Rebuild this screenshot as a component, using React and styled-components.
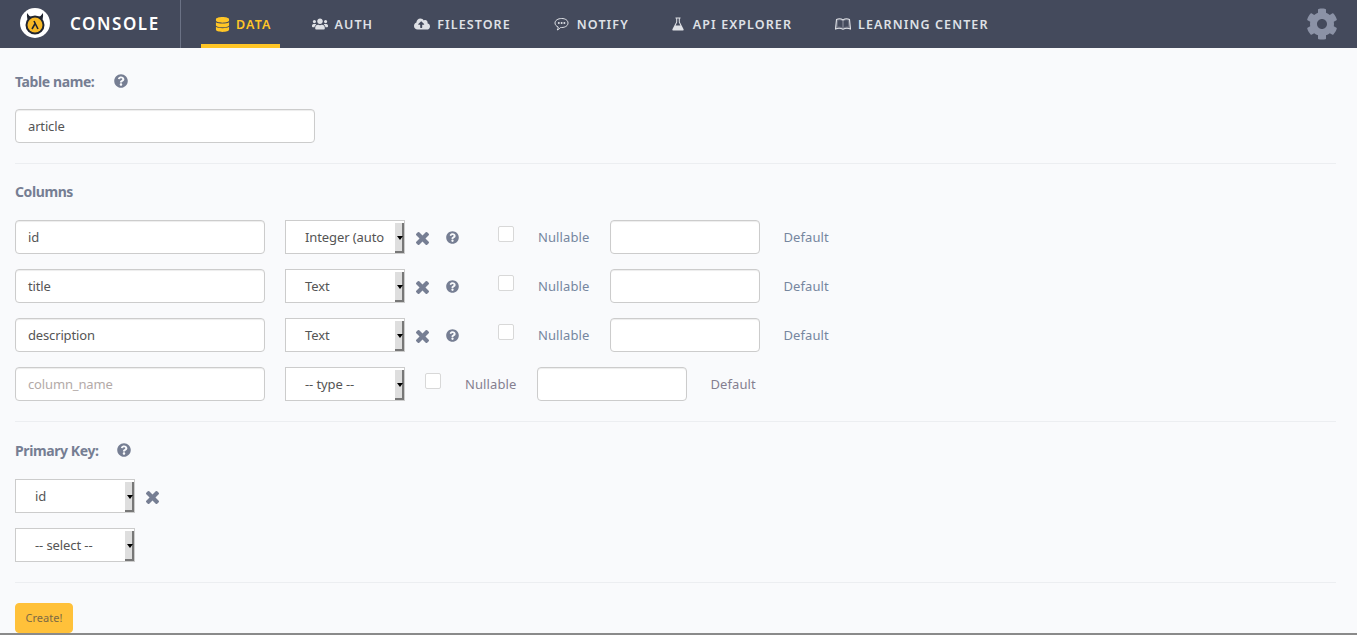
import React from 'react'
import styled, { createGlobalStyle } from 'styled-components'
import { FaDatabase, FaUsers, FaCloudUploadAlt, FaCog, FaQuestionCircle } from 'react-icons/fa'

const GlobalStyle = createGlobalStyle`
  html, body {
    margin: 0;
    padding: 0;
    height: 100%;
    background: #f9fafc;
    font-family: "Noto Sans", "Open Sans", sans-serif;
    font-size: 14px;
    color: #555;
    overflow: hidden;
  }
  * {
    box-sizing: border-box;
  }
`

const Page = styled.div`
  height: 635px;
  display: flex;
  flex-direction: column;
  border-bottom: 2px solid #8a8a8a;
  overflow: hidden;
`

const NavBar = styled.nav`
  height: 48px;
  flex: none;
  display: flex;
  align-items: stretch;
  background: #444a5c;
`

const Brand = styled.div`
  width: 181px;
  flex: none;
  display: flex;
  align-items: center;
  padding: 0 0 2px 19px;
  border-right: 1px solid #6b7285;
`

const BrandName = styled.span`
  margin-left: 19px;
  color: #fff;
  font-size: 17px;
  font-weight: 600;
  letter-spacing: 1.55px;
`

const Tabs = styled.div`
  display: flex;
  gap: 19px;
  margin-left: 20px;
`

const Tab = styled.div`
  display: flex;
  align-items: center;
  padding: 4px 9px 0 ${(p) => p.$lead}px;
  height: 48px;
  font-size: 12.5px;
  font-weight: 600;
  letter-spacing: 1.1px;
  white-space: nowrap;
  color: ${(p) => (p.$active ? '#ffc627' : '#dfe1e6')};
  border-bottom: 4px solid ${(p) => (p.$active ? '#ffc627' : 'transparent')};
`

const TabIcon = styled.span`
  width: ${(p) => p.$slot}px;
  flex: none;
  display: flex;
  align-items: center;
  font-size: ${(p) => p.$size || 14}px;
`

const SettingsIcon = styled.div`
  margin-left: auto;
  width: 70px;
  display: flex;
  align-items: center;
  justify-content: center;
  color: #8b92a6;
  font-size: 32px;
`

const Content = styled.main`
  flex: 1;
  padding: 0 21px 0 15px;
`

const Section = styled.section`
  border-bottom: ${(p) => (p.$last ? 'none' : '1px solid #eceef1')};
  padding-top: ${(p) => p.$top}px;
  padding-bottom: 20px;
`

const Heading = styled.div`
  display: flex;
  align-items: center;
  height: 26px;
  margin-bottom: ${(p) => p.$below || 15}px;
  font-size: 14px;
  font-weight: 700;
  letter-spacing: -0.4px;
  color: #767e93;
`

const HelpIcon = styled(FaQuestionCircle)`
  color: #767e93;
  font-size: ${(p) => p.$size || 13}px;
  margin-left: ${(p) => p.$gap || 0}px;
  flex: none;
`

const TextInput = styled.div`
  width: ${(p) => p.$width}px;
  height: 34px;
  flex: none;
  display: flex;
  align-items: center;
  padding: 0 12px;
  background: #fff;
  border: 1px solid #ccc;
  border-radius: 4px;
  box-shadow: inset 0 1px 1px rgba(0, 0, 0, 0.075);
  font-size: 13px;
  letter-spacing: -0.15px;
  color: ${(p) => (p.$placeholder ? '#b3aaa8' : '#555')};
`

const SelectBox = styled.div`
  position: relative;
  width: 120px;
  height: 34px;
  flex: none;
  padding: 0 21px 0 19px;
  background: #fff;
  border: 1px solid #ccc;
  font-size: 13px;
  line-height: 32px;
  letter-spacing: -0.1px;
  color: #555;
  white-space: nowrap;
  overflow: hidden;
`

const SelectButton = styled.span`
  position: absolute;
  top: 2px;
  right: 0;
  bottom: 0;
  width: 9px;
  background: #dedede;
  border-right: 2px solid #777;
  border-bottom: 2px solid #777;
  &::after {
    content: '';
    position: absolute;
    top: 13px;
    left: 2px;
    border-left: 3px solid transparent;
    border-right: 3px solid transparent;
    border-top: 4px solid #000;
  }
`

const RemoveSvg = styled.svg`
  width: 13px;
  height: 13px;
  margin: 2px 0 0 11px;
  flex: none;
  fill: #767e93;
`

const ColumnList = styled.div`
  display: flex;
  flex-direction: column;
  gap: 15px;
`

const ColumnRow = styled.div`
  display: flex;
  align-items: center;
`

const TypeCell = styled.div`
  margin-left: 20px;
  width: ${(p) => (p.$wide ? 193 : 120)}px;
  display: flex;
  align-items: center;
  flex: none;
`

const Check = styled.span`
  width: 16px;
  height: 16px;
  flex: none;
  margin: -6px 0 0 20px;
  background: #fff;
  border: 1px solid #d8d8d8;
  border-radius: 2px;
`

const Hint = styled.span`
  font-size: 13px;
  letter-spacing: 0.1px;
  flex: none;
  color: ${(p) => (p.$muted ? '#857f90' : '#76869f')};
  margin: ${(p) => p.$margin};
`

const KeyList = styled.div`
  display: flex;
  flex-direction: column;
  gap: 15px;
`

const KeyRow = styled.div`
  display: flex;
  align-items: center;
`

const CreateButton = styled.button`
  display: block;
  width: 58px;
  height: 30px;
  padding: 0 0 2px;
  border: 1px solid #ffc13a;
  border-radius: 4px;
  background: #ffc13a;
  color: #7d6a45;
  font-family: inherit;
  font-size: 11px;
`

const Logo = () => (
  <svg width="32" height="32" viewBox="0 0 32 32">
    <circle cx="16" cy="16" r="15" fill="#fff" />
    <path d="M8 6 Q7.5 12 10 15 L13 10 Q10 9.5 8 6 Z M24 6 Q24.5 12 22 15 L19 10 Q22 9.5 24 6 Z" fill="#20242f" />
    <circle cx="16" cy="18" r="9.5" fill="#20242f" />
    <circle cx="16" cy="18" r="7.5" fill="#f7b824" />
    <path d="M13 22 L16.2 16.5 L15 14 M16.2 16.5 L19 22" stroke="#20242f" strokeWidth="1.6" fill="none" />
  </svg>
)

const CommentIcon = () => (
  <svg width="15" height="15" viewBox="0 0 15 15">
    <path d="M7.7 1.5 C11.4 1.5 14 3.4 14 6 C14 8.6 11.4 10.5 7.7 10.5 L6.6 10.5 C5.6 11.5 4.8 12.4 3.2 13 C3.9 12 4.2 11 4.2 10 C2.2 9.2 1 7.7 1 6 C1 3.4 3.9 1.5 7.7 1.5 Z" fill="none" stroke="currentColor" strokeWidth="1" />
    <circle cx="4.8" cy="6" r="1" fill="currentColor" />
    <circle cx="7.6" cy="6" r="1" fill="currentColor" />
    <circle cx="10.4" cy="6" r="1" fill="currentColor" />
  </svg>
)

const FlaskIcon = () => (
  <svg width="12" height="14" viewBox="0 0 12 14">
    <path d="M3.5 0.5 H8.5 V1.5 H7.8 V5 L11.6 12.2 Q12 13.5 10.8 13.5 H1.2 Q0 13.5 0.4 12.2 L4.2 5 V1.5 H3.5 Z M5.2 1.5 V5.3 L3.6 8.5 H8.4 L6.8 5.3 V1.5 Z" fill="currentColor" fillRule="evenodd" />
  </svg>
)

const BookIcon = () => (
  <svg width="16" height="14" viewBox="0 0 16 14">
    <path d="M1.5 2.5 C3.5 1.6 6 1.6 8 3 C10 1.6 12.5 1.6 14.5 2.5 L15.5 12 C13 11 10.5 11 8 12.2 C5.5 11 3 11 0.5 12 Z" fill="currentColor" fillOpacity="0.25" stroke="currentColor" strokeWidth="1.1" />
    <path d="M3.2 3.6 C4.8 3.1 6 3.4 7 4.3 V10 C5.5 9.4 4.2 9.3 2.7 9.6 Z M12.8 3.6 C11.2 3.1 10 3.4 9 4.3 V10 C10.5 9.4 11.8 9.3 13.3 9.6 Z" fill="#444a5c" />
  </svg>
)

const RemoveIcon = () => (
  <RemoveSvg viewBox="110 366 1188 1188">
    <path d="M1298 1322q0 40-28 68l-136 136q-28 28-68 28t-68-28l-294-294-294 294q-28 28-68 28t-68-28l-136-136q-28-28-28-68t28-68l294-294-294-294q-28-28-28-68t28-68l136-136q28-28 68-28t68 28l294 294 294-294q28-28 68-28t68 28l136 136q28 28 28 68t-28 68l-294 294 294 294q28 28 28 68z" />
  </RemoveSvg>
)

const tabs = [
  { label: 'DATA', icon: <FaDatabase />, lead: 14, slot: 21, size: 15, active: true },
  { label: 'AUTH', icon: <FaUsers />, lead: 13, slot: 22, size: 16 },
  { label: 'FILESTORE', icon: <FaCloudUploadAlt />, lead: 13, slot: 23, size: 16 },
  { label: 'NOTIFY', icon: <CommentIcon />, lead: 15, slot: 23 },
  { label: 'API EXPLORER', icon: <FlaskIcon />, lead: 15, slot: 21 },
  { label: 'LEARNING CENTER', icon: <BookIcon />, lead: 15, slot: 23 },
]

const columns = [
  { name: 'id', type: 'Integer (auto' },
  { name: 'title', type: 'Text' },
  { name: 'description', type: 'Text' },
]

const Select = ({ children }) => (
  <SelectBox>
    {children}
    <SelectButton />
  </SelectBox>
)

export default function App() {
  return (
    <Page>
      <GlobalStyle />
      <NavBar>
        <Brand>
          <Logo />
          <BrandName>CONSOLE</BrandName>
        </Brand>
        <Tabs>
          {tabs.map(({ label, icon, lead, slot, size, active }) => (
            <Tab key={label} $active={active} $lead={lead}>
              <TabIcon $slot={slot} $size={size}>{icon}</TabIcon>
              {label}
            </Tab>
          ))}
        </Tabs>
        <SettingsIcon>
          <FaCog />
        </SettingsIcon>
      </NavBar>
      <Content>
        <Section $top={20}>
          <Heading>
            Table name:
            <HelpIcon $gap={20} $size={14} />
          </Heading>
          <TextInput $width={300}>article</TextInput>
        </Section>
        <Section $top={14}>
          <Heading $below={16}>Columns</Heading>
          <ColumnList>
            {columns.map((col) => (
              <ColumnRow key={col.name}>
                <TextInput $width={250}>{col.name}</TextInput>
                <TypeCell $wide>
                  <Select>{col.type}</Select>
                  <RemoveIcon />
                  <HelpIcon $gap={17} $size={13} />
                </TypeCell>
                <Check />
                <Hint $margin="0 21px 0 24px">Nullable</Hint>
                <TextInput $width={150} />
                <Hint $margin="0 0 0 23px">Default</Hint>
              </ColumnRow>
            ))}
            <ColumnRow>
              <TextInput $width={250} $placeholder>column_name</TextInput>
              <TypeCell>
                <Select>-- type --</Select>
              </TypeCell>
              <Check />
              <Hint $muted $margin="0 21px 0 24px">Nullable</Hint>
              <TextInput $width={150} />
              <Hint $muted $margin="0 0 0 23px">Default</Hint>
            </ColumnRow>
          </ColumnList>
        </Section>
        <Section $top={15}>
          <Heading $below={16}>
            Primary Key:
            <HelpIcon $gap={18} $size={14} />
          </Heading>
          <KeyList>
            <KeyRow>
              <Select>id</Select>
              <RemoveIcon />
            </KeyRow>
            <KeyRow>
              <Select>-- select --</Select>
            </KeyRow>
          </KeyList>
        </Section>
        <Section $top={20} $last>
          <CreateButton>Create!</CreateButton>
        </Section>
      </Content>
    </Page>
  )
}
